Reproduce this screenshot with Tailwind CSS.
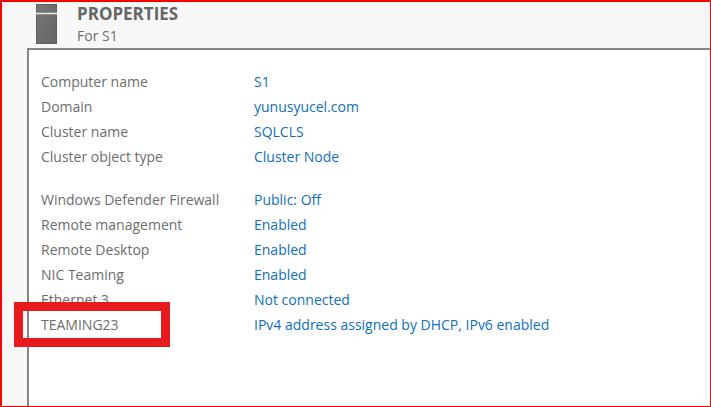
<!DOCTYPE html>
<html lang="en">
<head>
    <meta charset="UTF-8">
    <meta name="viewport" content="width=device-width, initial-scale=1.0">
    <title>Properties - S1</title>
    <script src="https://cdn.jsdelivr.net/npm/@tailwindcss/browser@4"></script>
</head>
<body class="font-['Open_Sans','Noto_Sans',sans-serif] text-[14px] leading-5 text-[#6d6d6d]">
    <div class="min-h-screen flex flex-col bg-[#f7f7f7] border-t-2 border-l-2 border-r border-b border-[#ff0000]">

        <!-- Header -->
        <header class="flex items-start gap-5 pl-[34px] pt-0.5">
            <svg class="w-[21px] h-10" viewBox="0 0 21 40" aria-hidden="true">
                <defs>
                    <linearGradient id="server" x1="0" y1="0" x2="1" y2="1">
                        <stop offset="0" stop-color="#777777"/>
                        <stop offset="1" stop-color="#656565"/>
                    </linearGradient>
                </defs>
                <rect width="21" height="40" fill="#5f5f5f"/>
                <rect x="1" y="1" width="19" height="38" fill="url(#server)"/>
                <rect y="8" width="21" height="3" fill="#8f8f8f"/>
                <rect y="9" width="21" height="1" fill="#e6e6e6"/>
            </svg>
            <div>
                <h1 class="text-[17px] leading-5 font-bold text-[#666666]">PROPERTIES</h1>
                <p class="leading-6">For S1</p>
            </div>
        </header>

        <!-- Properties panel -->
        <main class="flex-1 ml-[25px] pl-3 pt-[19px] pb-8 bg-white border-t-2 border-l-2 border-[#868686]">
            <table class="w-full text-left">
                <tbody>
                    <tr class="h-[25px]">
                        <th scope="row" class="w-[213px] p-0 font-normal">Computer name</th>
                        <td class="p-0"><a href="#" class="text-[#0f70bd]">S1</a></td>
                    </tr>
                    <tr class="h-[25px]">
                        <th scope="row" class="p-0 font-normal">Domain</th>
                        <td class="p-0"><a href="#" class="text-[#0f70bd]">yunusyucel.com</a></td>
                    </tr>
                    <tr class="h-[25px]">
                        <th scope="row" class="p-0 font-normal">Cluster name</th>
                        <td class="p-0"><a href="#" class="text-[#0f70bd]">SQLCLS</a></td>
                    </tr>
                    <tr class="h-[25px]">
                        <th scope="row" class="p-0 font-normal">Cluster object type</th>
                        <td class="p-0"><a href="#" class="text-[#0f70bd]">Cluster Node</a></td>
                    </tr>
                </tbody>
            </table>

            <table class="w-full mt-[18px] text-left">
                <tbody>
                    <tr class="h-[25px]">
                        <th scope="row" class="w-[213px] p-0 font-normal">Windows Defender Firewall</th>
                        <td class="p-0"><a href="#" class="text-[#0f70bd]">Public: Off</a></td>
                    </tr>
                    <tr class="h-[25px]">
                        <th scope="row" class="p-0 font-normal">Remote management</th>
                        <td class="p-0"><a href="#" class="text-[#0f70bd]">Enabled</a></td>
                    </tr>
                    <tr class="h-[25px]">
                        <th scope="row" class="p-0 font-normal">Remote Desktop</th>
                        <td class="p-0"><a href="#" class="text-[#0f70bd]">Enabled</a></td>
                    </tr>
                    <tr class="h-[25px]">
                        <th scope="row" class="p-0 font-normal">NIC Teaming</th>
                        <td class="p-0"><a href="#" class="text-[#0f70bd]">Enabled</a></td>
                    </tr>
                    <tr class="h-[25px]">
                        <th scope="row" class="p-0 font-normal">Ethernet 3</th>
                        <td class="p-0"><a href="#" class="text-[#0f70bd]">Not connected</a></td>
                    </tr>
                    <tr class="h-[25px]">
                        <th scope="row" class="relative p-0 font-normal">
                            TEAMING23
                            <!-- Highlight box -->
                            <span class="absolute -left-[27px] -top-[10px] w-[156px] h-[45px] border-[9px] border-[#e71b1e]"></span>
                        </th>
                        <td class="p-0"><a href="#" class="text-[#0f70bd]">IPv4 address assigned by DHCP, IPv6 enabled</a></td>
                    </tr>
                </tbody>
            </table>
        </main>
    </div>
</body>
</html>
